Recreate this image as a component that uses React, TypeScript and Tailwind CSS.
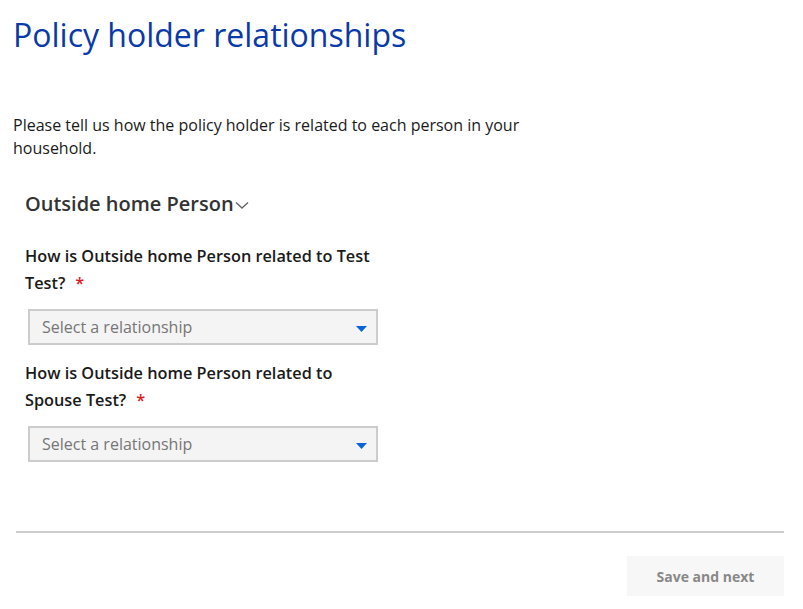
const QUESTIONS = [
  'How is Outside home Person related to Test Test?',
  'How is Outside home Person related to Spouse Test?',
];

function RelationshipSelect() {
  return (
    <div className="ml-[3px] mt-[12px] flex h-[36px] w-[350px] items-center justify-between border-2 border-[#cccccc] bg-[#f4f4f4] pl-[12px] pr-[9px]">
      <span className="text-[16px] text-[#767676]">Select a relationship</span>
      <svg width="11" height="6" viewBox="0 0 11 6" className="mt-[3px]">
        <path d="M0 0 H11 L5.5 6 Z" fill="#0b63d6" />
      </svg>
    </div>
  );
}

export default function App() {
  return (
    <div className="min-h-[609px] w-[803px] bg-white font-['Open_Sans',sans-serif] text-[#222]">
      <div className="px-[13px] pt-[13px]">
        <h1 className="text-[32px] leading-[43px] text-[#0a3aa8]">Policy holder relationships</h1>
        <p className="mt-[58px] w-[530px] text-[16px] leading-[23px] text-[#1a1a1a]">
          Please tell us how the policy holder is related to each person in your household.
        </p>
      </div>

      <div className="px-[25px]">
        {/* Person section */}
        <div className="mt-[30px] flex items-center">
          <h2 className="text-[20px] font-semibold leading-[27px] text-[#333]">Outside home Person</h2>
          <svg width="14" height="9" viewBox="0 0 14 9" className="ml-[1px] mt-[4px]">
            <polyline points="1,1.5 7,7 13,1.5" fill="none" stroke="#666" strokeWidth="1.4" />
          </svg>
        </div>

        <div className="mt-[26px]">
          {QUESTIONS.map((q, i) => (
            <div key={i} className={i > 0 ? 'mt-[15px]' : ''}>
              <label className="block w-[355px] text-[16.3px] font-semibold leading-[27px] text-[#1a1a1a]">
                {q}
                <span className="ml-[10px] text-[#e0191f]">*</span>
              </label>
              <RelationshipSelect />
            </div>
          ))}
        </div>
      </div>

      <div className="ml-[16px] mr-[19px] mt-[69px] border-t-2 border-[#cccccc]" />

      <div className="flex justify-end pr-[19px] pt-[23px]">
        <button className="h-[40px] w-[157px] bg-[#f7f7f7] text-[14px] font-bold text-[#888888]">
          Save and next
        </button>
      </div>
    </div>
  );
}
